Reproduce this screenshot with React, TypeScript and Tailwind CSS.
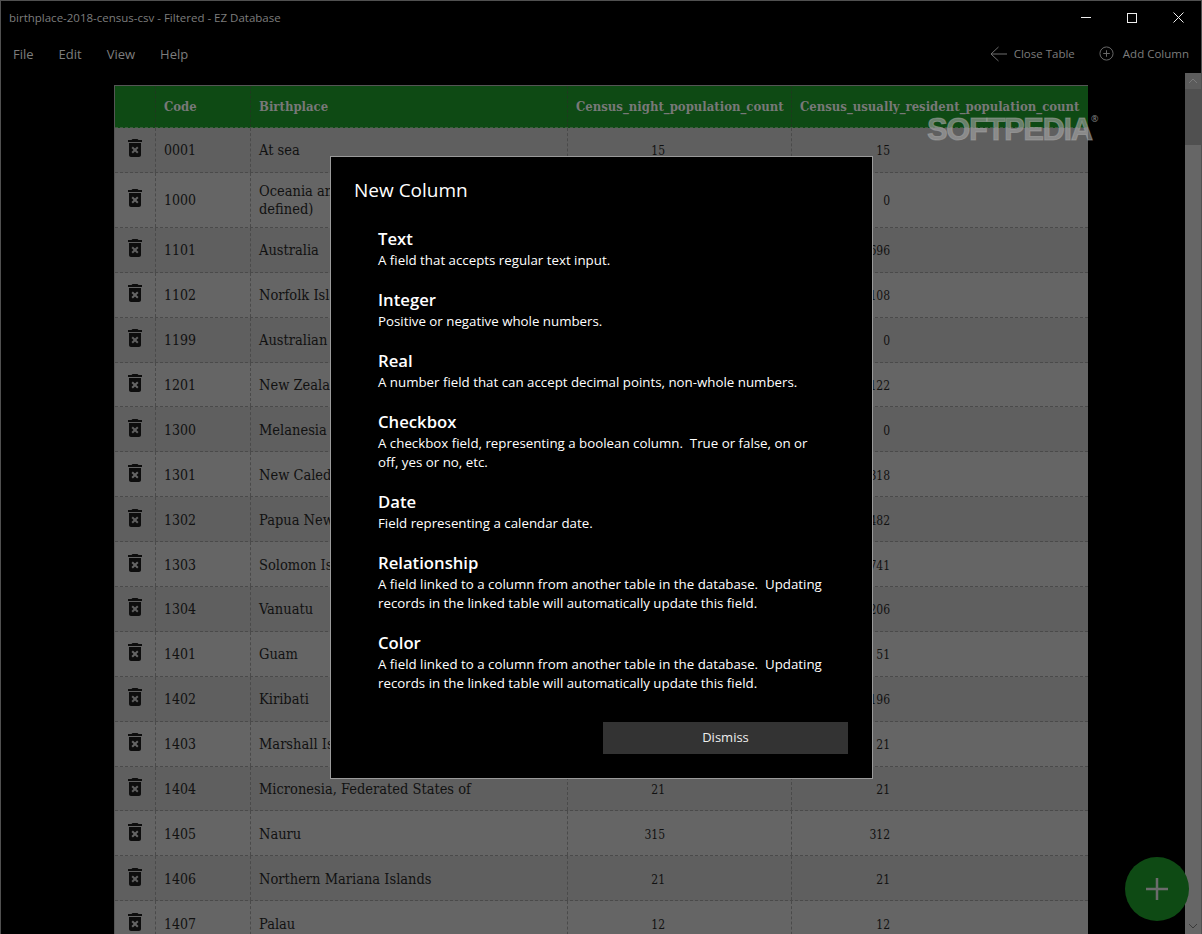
const rows = [
  { code: "0001", place: "At sea", night: "15", resident: "15", tall: false },
  { code: "1000", place: "Oceania and Antarctica (not further defined)", night: "0", resident: "0", tall: true },
  { code: "1101", place: "Australia", night: "699", resident: "696", tall: false },
  { code: "1102", place: "Norfolk Island", night: "105", resident: "108", tall: false },
  { code: "1199", place: "Australian External Territories", night: "0", resident: "0", tall: false },
  { code: "1201", place: "New Zealand", night: "120", resident: "122", tall: false },
  { code: "1300", place: "Melanesia", night: "0", resident: "0", tall: false },
  { code: "1301", place: "New Caledonia", night: "315", resident: "318", tall: false },
  { code: "1302", place: "Papua New Guinea", night: "480", resident: "482", tall: false },
  { code: "1303", place: "Solomon Islands", night: "738", resident: "741", tall: false },
  { code: "1304", place: "Vanuatu", night: "204", resident: "206", tall: false },
  { code: "1401", place: "Guam", night: "51", resident: "51", tall: false },
  { code: "1402", place: "Kiribati", night: "195", resident: "196", tall: false },
  { code: "1403", place: "Marshall Islands", night: "21", resident: "21", tall: false },
  { code: "1404", place: "Micronesia, Federated States of", night: "21", resident: "21", tall: false },
  { code: "1405", place: "Nauru", night: "315", resident: "312", tall: false },
  { code: "1406", place: "Northern Mariana Islands", night: "21", resident: "21", tall: false },
  { code: "1407", place: "Palau", night: "12", resident: "12", tall: false },
];

const columnTypes = [
  { name: "Text", lines: ["A field that accepts regular text input."] },
  { name: "Integer", lines: ["Positive or negative whole numbers."] },
  { name: "Real", lines: ["A number field that can accept decimal points, non-whole numbers."] },
  { name: "Checkbox", lines: ["A checkbox field, representing a boolean column.  True or false, on or", "off, yes or no, etc."] },
  { name: "Date", lines: ["Field representing a calendar date."] },
  { name: "Relationship", lines: ["A field linked to a column from another table in the database.  Updating", "records in the linked table will automatically update this field."] },
  { name: "Color", lines: ["A field linked to a column from another table in the database.  Updating", "records in the linked table will automatically update this field."] },
];

function TrashIcon() {
  return (
    <svg width="24" height="24" viewBox="0 0 24 24" fill="#0d0d0d" className="-mt-[3px]">
      <path d="M6 19c0 1.1.9 2 2 2h8c1.1 0 2-.9 2-2V7H6v12zm2.46-7.12l1.41-1.41L12 12.59l2.12-2.12 1.41 1.41L13.41 14l2.12 2.12-1.41 1.41L12 15.41l-2.12 2.12-1.41-1.41L10.59 14l-2.13-2.12zM15.5 4l-1-1h-5l-1 1H5v2h14V4z" />
    </svg>
  );
}

function Table() {
  return (
    <div className="w-[974px] mt-[12px] border-l border-t border-[#555] font-['DejaVu_Serif_Condensed','DejaVu_Serif',serif]">
      <div className="flex h-[42px] bg-[#0e4a14] text-[#787878] text-[13px] font-bold items-stretch border-b border-dashed border-[#3c5c3c]">
        <div className="w-[41px] border-r border-dashed border-[#1d3a1d]" />
        <div className="w-[95px] pl-[8px] flex items-center border-r border-dashed border-[#1d3a1d]">Code</div>
        <div className="w-[317px] pl-[8px] flex items-center border-r border-dashed border-[#1d3a1d]">Birthplace</div>
        <div className="w-[224px] pl-[8px] flex items-center border-r border-dashed border-[#1d3a1d] whitespace-nowrap">Census_night_population_count</div>
        <div className="w-[296px] pl-[8px] flex items-center whitespace-nowrap">Census_usually_resident_population_count</div>
      </div>
      {rows.map((row, i) => (
        <div
          key={row.code}
          className={`flex text-[14.5px] leading-[18px] text-[#111] border-b border-dashed border-[#4a4a4a] ${row.tall ? "h-[55px]" : "h-[44.9px]"} ${i % 2 === 0 ? "bg-[#5f5f5f]" : "bg-[#656565]"}`}
        >
          <div className="w-[41px] flex items-center justify-center border-r border-dashed border-[#4a4a4a]">
            <TrashIcon />
          </div>
          <div className="w-[95px] pl-[8px] pt-[1px] text-[14px] flex items-center border-r border-dashed border-[#4a4a4a]">{row.code}</div>
          <div className="w-[317px] pl-[8px] pr-[20px] pt-[1px] flex items-center border-r border-dashed border-[#4a4a4a]">{row.place}</div>
          <div className="w-[224px] pr-[126px] pt-[3px] flex items-center justify-end text-[12px] border-r border-dashed border-[#4a4a4a]">{row.night}</div>
          <div className="w-[296px] pr-[198px] pt-[3px] flex items-center justify-end text-[12px]">{row.resident}</div>
        </div>
      ))}
    </div>
  );
}

function NewColumnDialog() {
  return (
    <div className="absolute left-[329px] top-[155px] w-[543px] h-[623px] bg-black border border-[#9a9a9a] text-white font-['Open_Sans',sans-serif] flex flex-col">
      <div className="pl-[23px] pt-[20px] text-[19px] leading-[27px]">New Column</div>
      <div className="pl-[47px] pt-[23px] flex flex-col gap-[18px]">
        {columnTypes.map((t) => (
          <div key={t.name}>
            <div className="text-[16.7px] leading-[24px] font-semibold">{t.name}</div>
            {t.lines.map((l) => (
              <div key={l} className="text-[13.3px] leading-[19px] whitespace-pre">{l}</div>
            ))}
          </div>
        ))}
      </div>
      <button className="absolute left-[272px] top-[565px] w-[245px] h-[32px] bg-[#333] text-[13px] text-[#eee]">Dismiss</button>
    </div>
  );
}

export default function App() {
  return (
    <div className="relative w-[1202px] h-[934px] overflow-hidden bg-black border-t border-l border-r border-[#505050] flex flex-col font-['Open_Sans',sans-serif] text-[#7d7d7d]">
      <div className="h-[33px] shrink-0 flex items-center justify-between">
        <div className="pl-[8px] text-[11.5px]">birthplace-2018-census-csv - Filtered - EZ Database</div>
        <div className="flex items-center">
          <div className="w-[46px] flex justify-center"><div className="w-[10px] h-px bg-[#eee]" /></div>
          <div className="w-[46px] flex justify-center"><div className="w-[10px] h-[10px] border border-[#eee]" /></div>
          <div className="w-[46px] flex justify-center">
            <svg width="11" height="11" viewBox="0 0 11 11" stroke="#eee" strokeWidth="1"><path d="M0.5 0.5l10 10M10.5 0.5l-10 10" /></svg>
          </div>
        </div>
      </div>
      <div className="h-[39px] shrink-0 flex items-center justify-between text-[13px]">
        <div className="flex pl-[12px] gap-[25px] pt-[2px]">
          <span>File</span>
          <span>Edit</span>
          <span>View</span>
          <span>Help</span>
        </div>
        <div className="flex items-center pr-[12px] text-[11.5px]">
          <svg width="17" height="16" viewBox="0 0 17 16" fill="none" stroke="#6e6e6e" className="mr-[7px]"><path d="M8.5 1L1 8l7.5 7M1 8h16" /></svg>
          <span>Close Table</span>
          <svg width="15" height="15" viewBox="0 0 16 16" fill="none" stroke="#6e6e6e" className="ml-[24px] mr-[9px]"><circle cx="8" cy="8" r="7" /><path d="M8 4.5v7M4.5 8h7" /></svg>
          <span>Add Column</span>
        </div>
      </div>
      <div className="flex-1 min-h-0 flex">
        <div className="flex-1 min-w-0 pl-[113px] overflow-hidden">
          <Table />
        </div>
        <div className="w-[16px] flex flex-col bg-[#666] items-center">
          <div className="h-[16px] w-full bg-[#5c5c5c] flex items-center justify-center">
            <svg width="10" height="6" viewBox="0 0 10 6" fill="none" stroke="#7a7a7a"><path d="M1 5l4-4 4 4" /></svg>
          </div>
          <div className="h-[56px] w-full bg-[#505050]" />
          <div className="flex-1" />
          <svg width="10" height="6" viewBox="0 0 10 6" fill="none" stroke="#3a3a3a" className="mb-[5px]"><path d="M1 1l4 4 4-4" /></svg>
        </div>
      </div>

      <div className="absolute left-[926px] top-[116px] text-[31px] leading-[25px] tracking-[-1.4px] font-bold font-['Liberation_Sans',sans-serif] text-[#a8a8a8]/60 [-webkit-text-stroke:1px_#a8a8a880]">SOFTPEDIA</div>
      <div className="absolute left-[1090px] top-[113px] text-[9px] leading-[9px] text-[#888]">®</div>

      <NewColumnDialog />

      <div className="absolute left-[1124px] top-[856px] w-[64px] h-[64px] rounded-full bg-[#0e4a14] flex items-center justify-center">
        <svg width="24" height="24" viewBox="0 0 24 24" stroke="#6b6b6b" strokeWidth="2.5"><path d="M12 1v22M1 12h22" /></svg>
      </div>
    </div>
  );
}
